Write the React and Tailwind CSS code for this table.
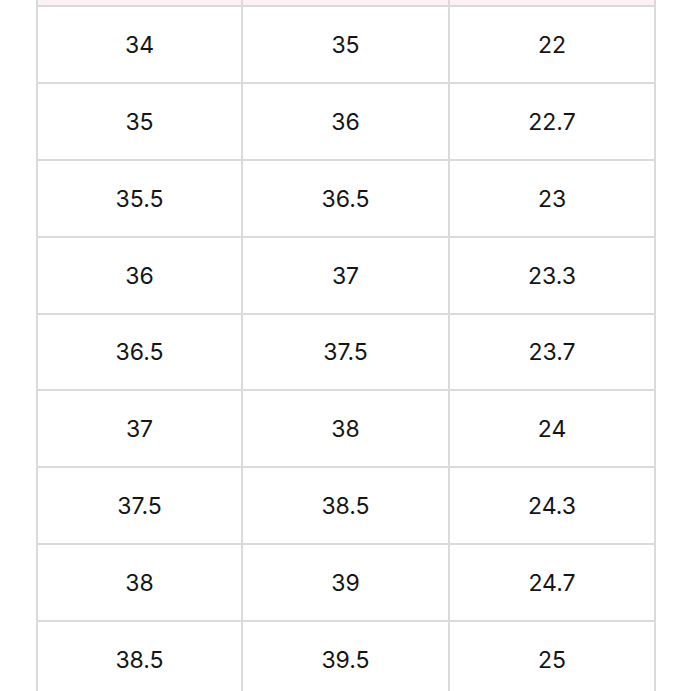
import React from 'react';

const rows = [
  ['34', '35', '22'],
  ['35', '36', '22.7'],
  ['35.5', '36.5', '23'],
  ['36', '37', '23.3'],
  ['36.5', '37.5', '23.7'],
  ['37', '38', '24'],
  ['37.5', '38.5', '24.3'],
  ['38', '39', '24.7'],
  ['38.5', '39.5', '25'],
];

const App = () => {
  return (
    <div className="w-[691px] h-[691px] overflow-hidden bg-white pl-[36px]" style={{ fontFamily: 'Inter, "Liberation Sans", sans-serif' }}>
      <div className="w-[620px] border-r-2 border-[#dadada]">
        {/* Header tail (scrolled off) */}
        <div className="grid grid-cols-[205px_207px_206px] h-[7px] bg-[#fcf1f3] border-b-2 border-[#dadada]">
          <div className="border-l-2 border-[#dadada]" />
          <div className="border-l-2 border-[#dadada]" />
          <div className="border-l-2 border-[#dadada]" />
        </div>
        {rows.map((row, i) => (
          <div
            key={i}
            className={`grid grid-cols-[205px_207px_206px] border-b-2 border-[#dadada] ${i === 4 ? 'h-[76px]' : 'h-[77px]'}`}
          >
            {row.map((cell, j) => (
              <div
                key={j}
                className="flex items-center justify-center border-l-2 border-[#dadada] pt-[1px] text-[23px] text-[#151515]"
              >
                {cell}
              </div>
            ))}
          </div>
        ))}
      </div>
    </div>
  );
};

export default App;
